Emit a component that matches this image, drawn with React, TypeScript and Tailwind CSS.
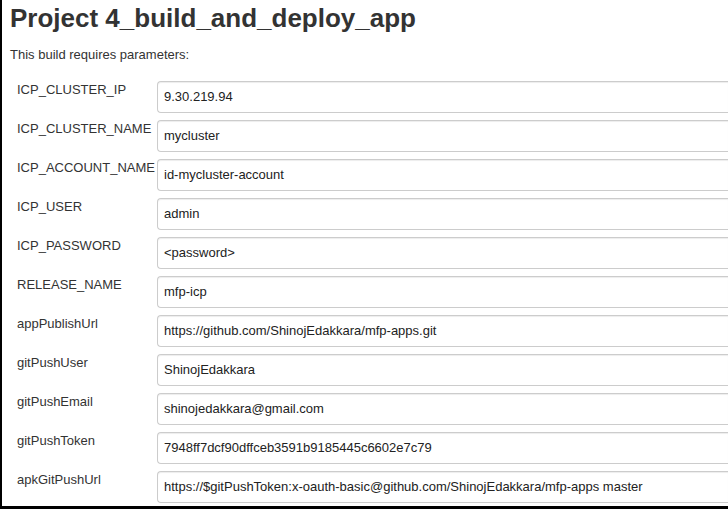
const params: [string, string][] = [
  ["ICP_CLUSTER_IP", "9.30.219.94"],
  ["ICP_CLUSTER_NAME", "mycluster"],
  ["ICP_ACCOUNT_NAME", "id-mycluster-account"],
  ["ICP_USER", "admin"],
  ["ICP_PASSWORD", "<password>"],
  ["RELEASE_NAME", "mfp-icp"],
  ["appPublishUrl", "https://github.com/ShinojEdakkara/mfp-apps.git"],
  ["gitPushUser", "ShinojEdakkara"],
  ["gitPushEmail", "shinojedakkara@gmail.com"],
  ["gitPushToken", "7948ff7dcf90dffceb3591b9185445c6602e7c79"],
  ["apkGitPushUrl", "https://$gitPushToken:x-oauth-basic@github.com/ShinojEdakkara/mfp-apps master"],
]

export default function App() {
  return (
    <div
      className="h-[509px] w-[728px] overflow-hidden bg-white border-l-2 border-b-[3px] border-black text-[#333]"
      style={{ fontFamily: '"Liberation Sans", Arial, sans-serif' }}
    >
      <div className="pl-2 pt-[3px]">
        <h1 className="text-[26px] font-bold leading-[30px] text-[#333]">Project 4_build_and_deploy_app</h1>
        <p className="mt-[13px] text-[13px] leading-[18px]">This build requires parameters:</p>
      </div>
      <div className="mt-[17px] flex flex-col gap-[7px]">
        {params.map(([name, value]) => (
          <div key={name} className="flex">
            <div className="w-[155px] shrink-0 pl-[15px] text-[13px] leading-[18px] whitespace-nowrap">{name}</div>
            <div className="h-[32px] flex-1 min-w-0 rounded-l-[4px] border border-r-0 border-[#ccc] bg-white pl-[6px] text-[13px] leading-[30px] whitespace-nowrap shadow-[inset_0_1px_1px_rgba(0,0,0,0.075)] text-[#222]">
              {value}
            </div>
          </div>
        ))}
      </div>
    </div>
  )
}
